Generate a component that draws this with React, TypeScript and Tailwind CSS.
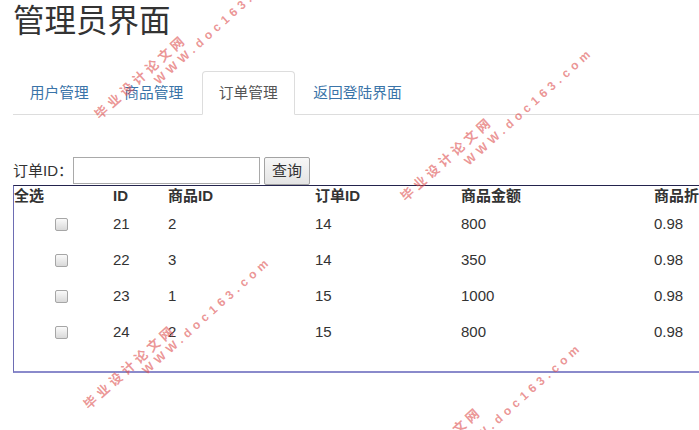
import React from 'react';

const tabs = [
  { label: '用户管理', active: false },
  { label: '商品管理', active: false },
  { label: '订单管理', active: true },
  { label: '返回登陆界面', active: false },
];

const orders = [
  { id: 21, goodsId: 2, orderId: 14, amount: 800, discount: '0.98' },
  { id: 22, goodsId: 3, orderId: 14, amount: 350, discount: '0.98' },
  { id: 23, goodsId: 1, orderId: 15, amount: 1000, discount: '0.98' },
  { id: 24, goodsId: 2, orderId: 15, amount: 800, discount: '0.98' },
];

// watermark lines, rotated about their left edge
const marks = [
  { text: '毕业设计论文网', cls: 'left-[97px] top-[108px] text-[13px] tracking-[4px] leading-[18px]' },
  { text: 'WWW.doc163.com', cls: 'left-[156px] top-[74px] text-[12px] tracking-[4.5px] leading-[16px]' },
  { text: '毕业设计论文网', cls: 'left-[403px] top-[190px] text-[13px] tracking-[4px] leading-[18px]' },
  { text: 'WWW.doc163.com', cls: 'left-[466px] top-[155px] text-[12px] tracking-[4.5px] leading-[16px]' },
  { text: '毕业设计论文网', cls: 'left-[86px] top-[398px] text-[13px] tracking-[4px] leading-[18px]' },
  { text: 'WWW.doc163.com', cls: 'left-[144px] top-[364px] text-[12px] tracking-[4.5px] leading-[16px]' },
  { text: '毕业设计论文网', cls: 'left-[392px] top-[480px] text-[13px] tracking-[4px] leading-[18px]' },
  { text: 'WWW.doc163.com', cls: 'left-[455px] top-[450px] text-[12px] tracking-[4.5px] leading-[16px]' },
];

const Checkbox = () => (
  <span className="ml-[41px] block w-[13px] h-[13px] rounded-[2px] border border-[#a6a6a6] bg-gradient-to-b from-[#fafafa] to-[#d9d9d9]" />
);

const App = () => {
  return (
    <div className="relative w-[699px] h-[430px] overflow-hidden bg-white pl-[13px] text-[#333] font-['Liberation_Sans','Noto_Sans_CJK_SC',sans-serif]">
      <h2 className="pt-[3px] text-[31.5px] leading-[36px] font-normal">管理员界面</h2>

      {/* Tabs */}
      <ul className="mt-[32px] flex border-b border-[#ddd] text-[14.75px] leading-[21px]">
        {tabs.map((tab) => (
          <li key={tab.label} className="mr-[2px] -mb-px">
            <span
              className={
                tab.active
                  ? 'block px-[15.75px] py-[10.5px] rounded-t-[4px] border border-[#ddd] border-b-transparent bg-white text-[#555]'
                  : 'block px-[15.75px] py-[10.5px] rounded-t-[4px] border border-transparent text-[#3a74a8]'
              }
            >
              {tab.label}
            </span>
          </li>
        ))}
      </ul>

      {/* Search */}
      <div className="mt-[42px] flex items-start h-[28px] text-[15px]">
        <span className="w-[60px] leading-[27px]">订单ID：</span>
        <input className="w-[187px] h-[27px] border border-[#a9a9a9] bg-white outline-none" />
        <button className="ml-[4px] w-[46px] h-[28px] rounded-[2px] border border-[#a3a3a3] bg-gradient-to-b from-[#f7f7f7] to-[#e4e4e4] text-[15px] leading-[24px] text-[#333]">
          查询
        </button>
      </div>

      {/* Orders table */}
      <div className="w-[760px] border-t border-t-[#23234d] border-l border-l-[#6d6db3] border-b-2 border-b-[#8a8acb] text-[15px]">
        <table className="table-fixed border-collapse w-full">
          <colgroup>
            <col className="w-[99px]" />
            <col className="w-[55px]" />
            <col className="w-[147px]" />
            <col className="w-[146px]" />
            <col className="w-[193px]" />
            <col />
          </colgroup>
          <thead>
            <tr className="h-[20px] font-bold text-left leading-[20px]">
              <th className="p-0 whitespace-nowrap">全选</th>
              <th className="p-0">ID</th>
              <th className="p-0">商品ID</th>
              <th className="p-0">订单ID</th>
              <th className="p-0">商品金额</th>
              <th className="p-0 whitespace-nowrap">商品折扣</th>
            </tr>
          </thead>
          <tbody>
            {orders.map((o) => (
              <tr key={o.id} className="h-[36px]">
                <td className="p-0 align-middle">
                  <Checkbox />
                </td>
                <td className="p-0">{o.id}</td>
                <td className="p-0">{o.goodsId}</td>
                <td className="p-0">{o.orderId}</td>
                <td className="p-0">{o.amount}</td>
                <td className="p-0">{o.discount}</td>
              </tr>
            ))}
            <tr className="h-[21px]">
              <td colSpan={6} className="p-0" />
            </tr>
          </tbody>
        </table>
      </div>

      {/* Watermark */}
      <div className="pointer-events-none absolute inset-0">
        {marks.map((m, i) => (
          <span
            key={i}
            className={`absolute origin-left -rotate-[42deg] whitespace-nowrap font-bold text-[rgba(222,82,82,0.62)] ${m.cls}`}
          >
            {m.text}
          </span>
        ))}
      </div>
    </div>
  );
};

export default App;
